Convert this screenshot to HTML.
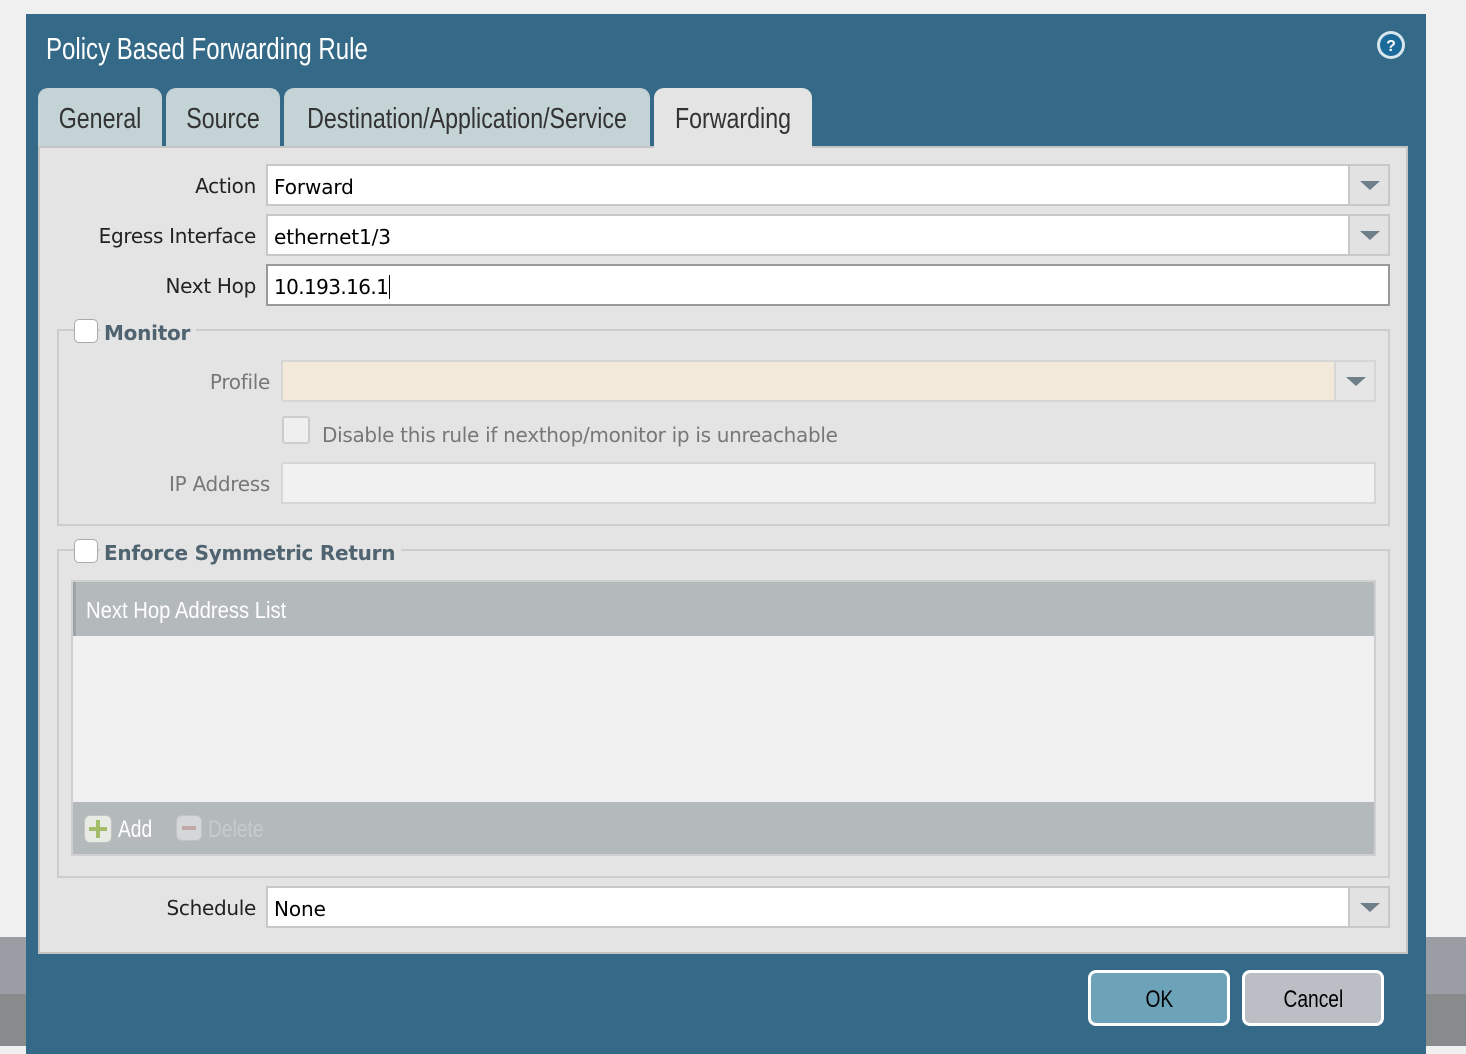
<!DOCTYPE html>
<html><head><style>
*{box-sizing:border-box;margin:0;padding:0}
body{width:1466px;height:1046px;overflow:hidden;background:#f0f0f0;font-family:"DejaVu Sans","Liberation Sans",sans-serif;position:relative}
.a{position:absolute}
.nar{font-family:"Liberation Sans",sans-serif}
.sq{display:inline-block;transform:scaleX(0.8);transform-origin:left center;white-space:nowrap}
.sc{display:inline-block;transform:scaleX(0.8);transform-origin:center center;white-space:nowrap}
.tab{position:absolute;top:88px;height:58px;background:#c4d3d5;border-radius:10px 10px 0 0;color:#333;font-size:29px;line-height:62px;overflow:hidden;white-space:nowrap}
.tab span{position:absolute;left:50%;top:0;transform:translateX(-50%) scaleX(0.8)}
.lbl{position:absolute;right:1210px;font-size:20px;color:#222;letter-spacing:-0.3px;text-align:right;white-space:nowrap}
.inp{position:absolute;background:#fff;border:2px solid #c8c8c8;font-size:20px;color:#000;padding-left:6px;line-height:42px;letter-spacing:-0.1px}
.dd{position:absolute;width:42px;background:#e2e2e2;border:2px solid #c8c8c8}
.dd:after{content:"";position:absolute;left:10px;top:15px;border-left:10px solid transparent;border-right:10px solid transparent;border-top:9px solid #6e7f8a}
.cb{position:absolute;width:24px;height:24px;background:#fff;border:1px solid #aaa;border-radius:5px}
.fs{position:absolute;border:2px solid #cdcdcd}
.leg{position:absolute;font-size:20px;font-weight:bold;color:#4f6470;background:#e4e4e4;padding:0 6px 0 4px;letter-spacing:-0.25px;line-height:26px}
</style></head><body>
<div class="a" style="left:0;top:937px;width:26px;height:57px;background:#9a9da3"></div>
<div class="a" style="left:0;top:994px;width:26px;height:52px;background:#888b8c"></div>
<div class="a" style="left:1426px;top:937px;width:40px;height:57px;background:#9a9da3"></div>
<div class="a" style="left:1426px;top:994px;width:40px;height:52px;background:#888b8c"></div>
<div class="a" style="left:26px;top:14px;width:1400px;height:1040px;background:#346a87"></div>
<div class="a nar" style="left:46px;top:31px;font-size:31px;color:#fff"><span class="sq" style="transform:scaleX(0.775)">Policy Based Forwarding Rule</span></div>
<svg class="a" style="left:1376px;top:30px" width="30" height="30"><circle cx="15" cy="15" r="14" fill="#d8e6ee"/><circle cx="15" cy="15" r="11" fill="#1a6a9a"/><text x="15" y="21" font-size="16" font-weight="bold" fill="#fff" text-anchor="middle" font-family="Liberation Sans">?</text></svg>
<div class="tab nar" style="left:38px;width:124px"><span>General</span></div>
<div class="tab nar" style="left:166px;width:114px"><span>Source</span></div>
<div class="tab nar" style="left:284px;width:366px"><span>Destination/Application/Service</span></div>
<div class="tab nar" style="left:654px;width:158px;background:#e4e4e4;height:62px;z-index:2"><span>Forwarding</span></div>
<div class="a" style="left:38px;top:146px;width:1370px;height:808px;background:#e4e4e4;border:2px solid #c4c4c4"></div>

<div class="lbl" style="top:174px">Action</div>
<div class="inp" style="left:266px;top:164px;width:1084px;height:42px">Forward</div>
<div class="dd" style="left:1348px;top:164px;height:42px"></div>
<div class="lbl" style="top:224px">Egress Interface</div>
<div class="inp" style="left:266px;top:214px;width:1084px;height:42px">ethernet1/3</div>
<div class="dd" style="left:1348px;top:214px;height:42px"></div>
<div class="lbl" style="top:274px">Next Hop</div>
<div class="inp" style="left:266px;top:264px;width:1124px;height:42px;border-color:#999;letter-spacing:-0.6px">10.193.16.1<span style="border-left:1.5px solid #000;margin-left:1px"></span></div>

<div class="fs" style="left:57px;top:329px;width:1333px;height:197px"></div>
<div class="leg" style="left:100px;top:320px">Monitor</div>
<div class="cb" style="left:74px;top:319px"></div>
<div class="lbl" style="top:370px;right:1196px;color:#777">Profile</div>
<div class="inp" style="left:281px;top:360px;width:1056px;height:42px;background:#f2e9da;border-color:#d6d6d6"></div>
<div class="dd" style="left:1334px;top:360px;height:42px;border-color:#d6d6d6;background:#e6e6e6"></div>
<div class="cb" style="left:282px;top:416px;width:28px;height:28px;background:#efefef;border-color:#ccc;border-width:2px;border-radius:3px"></div>
<div class="a" style="left:322px;top:423px;font-size:20px;color:#777;letter-spacing:-0.3px">Disable this rule if nexthop/monitor ip is unreachable</div>
<div class="lbl" style="top:472px;right:1196px;color:#777">IP Address</div>
<div class="inp" style="left:281px;top:462px;width:1095px;height:42px;background:#f1f1f1;border-color:#d6d6d6"></div>

<div class="fs" style="left:57px;top:549px;width:1333px;height:329px"></div>
<div class="leg" style="left:100px;top:540px">Enforce Symmetric Return</div>
<div class="cb" style="left:74px;top:539px"></div>
<div class="a" style="left:71px;top:580px;width:1305px;height:276px;border:2px solid #cfcfcf;background:#f0f0f0"></div>
<div class="a" style="left:73px;top:582px;width:1301px;height:54px;background:#b4b9bc;border-left:3px solid #9ea4a7"></div>
<div class="a nar" style="left:86px;top:597px;font-size:23px;color:#fff"><span class="sq" style="transform:scaleX(0.88)">Next Hop Address List</span></div>
<div class="a" style="left:73px;top:802px;width:1301px;height:52px;background:#b4b9bc"></div>
<div class="a" style="left:84px;top:815px;width:28px;height:28px;border-radius:6px;background:#e8ebe4;border:1px solid #c0c4c4"></div>
<div class="a" style="left:89px;top:827px;width:18px;height:4px;background:#a4bd6a"></div>
<div class="a" style="left:96px;top:820px;width:4px;height:18px;background:#a4bd6a"></div>
<div class="a nar" style="left:118px;top:816px;font-size:24px;color:#fff"><span class="sq">Add</span></div>
<div class="a" style="left:176px;top:815px;width:26px;height:26px;border-radius:6px;background:#d4d7d8;border:1px solid #c0c4c4"></div>
<div class="a" style="left:182px;top:826px;width:14px;height:4px;background:#c2a8a6"></div>
<div class="a nar" style="left:208px;top:816px;font-size:24px;color:#c8cbcd"><span class="sq">Delete</span></div>

<div class="lbl" style="top:896px">Schedule</div>
<div class="inp" style="left:266px;top:886px;width:1084px;height:42px">None</div>
<div class="dd" style="left:1348px;top:886px;height:42px"></div>

<div class="a nar" style="left:1088px;top:970px;width:142px;height:56px;background:#6da3b9;border:3px solid #fff;border-radius:8px;text-align:center;line-height:54px;font-size:24px;color:#000"><span class="sc">OK</span></div>
<div class="a nar" style="left:1242px;top:970px;width:142px;height:56px;background:#bcbec6;border:3px solid #fff;border-radius:8px;text-align:center;line-height:54px;font-size:24px;color:#000"><span class="sc">Cancel</span></div>
</body></html>
